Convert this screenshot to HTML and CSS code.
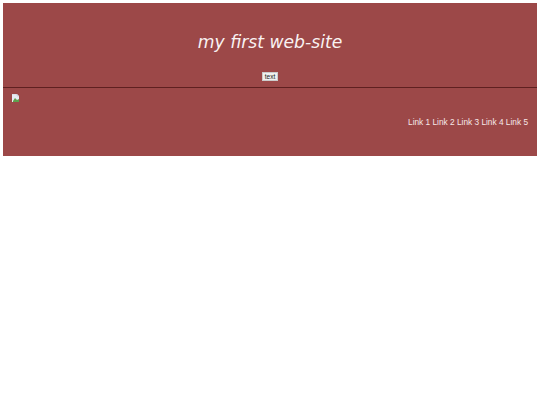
FILE: index.html
```html
<!DOCTYPE html>
<html lang="en">
<head>
    <meta charset="UTF-8">
    <title>my first web-site</title>
    <link rel="stylesheet" href="styles.css">
</head>
<body>
    <div class="banner">
        <div class="header">
            <h1>my first web-site</h1>
            <button class="text-btn">text</button>
        </div>
        <div class="nav-row">
            <svg class="broken-img" width="7" height="8" viewBox="0 0 7 8">
                <path d="M0 0h5l2 2v6H0z" fill="#e8ecf4"/>
                <path d="M0 0h5v2h2" fill="none" stroke="#b9bec8" stroke-width="0.5"/>
                <path d="M1 7l2-3 2 2 2-1v3H1z" fill="#5fa04e"/>
            </svg>
            <div class="links">
                <a href="#">Link 1</a>
                <a href="#">Link 2</a>
                <a href="#">Link 3</a>
                <a href="#">Link 4</a>
                <a href="#">Link 5</a>
            </div>
        </div>
    </div>
</body>
</html>
```

FILE: styles.css
```css
body {
    margin: 3px;
    background-color: #fff;
    font-family: 'Liberation Sans', Arial, sans-serif;
}

.banner {
    background-color: #9c4848;
    color: #fff;
}

.header {
    height: 85px;
    box-sizing: border-box;
    padding-top: 28px;
    border-bottom: 1px solid #5f2020;
    text-align: center;
}

h1 {
    margin: 0;
    font-family: 'DejaVu Sans', Verdana, sans-serif;
    font-size: 17.2px;
    font-style: italic;
    font-weight: normal;
    line-height: 22px;
    color: #f9f2f2;
}

.text-btn {
    display: block;
    margin: 19px auto 0;
    padding: 0;
    height: 9px;
    width: 16px;
    box-sizing: border-box;
    background-color: #f0f0f0;
    border: 1px solid #ccc;
    font-family: 'Liberation Sans', Arial, sans-serif;
    font-size: 6.5px;
    line-height: 7px;
    color: #222;
}

.nav-row {
    height: 68px;
    box-sizing: border-box;
    padding: 6px 9px 0;
    display: flex;
    justify-content: space-between;
    align-items: flex-start;
}

.links {
    margin-top: 21px;
    font-size: 8.3px;
    line-height: 14px;
}

.links a {
    color: #f6e8e8;
    text-decoration: none;
}
```
